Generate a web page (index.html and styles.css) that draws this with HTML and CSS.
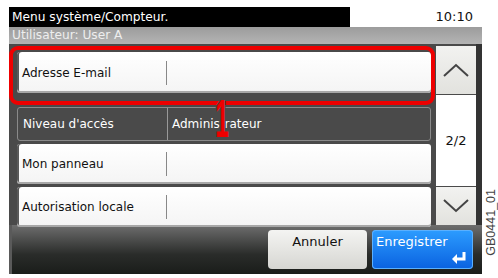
FILE: index.html
```html
<!DOCTYPE html>
<html>
<head lang="fr">
<meta charset="UTF-8">
<title>Menu système/Compteur.</title>
<link rel="stylesheet" href="styles.css">
</head>
<body>
  <div class="screen">
    <div class="titlebar">
      <div class="title">Menu système/Compteur.</div>
      <div class="clock">10:10</div>
    </div>
    <div class="userbar">Utilisateur: User A</div>

    <div class="main">
      <div class="list">
        <div class="row row-first">
          <div class="label">Adresse E-mail</div>
          <div class="sep"></div>
          <div class="value"></div>
        </div>
        <div class="row row-dark">
          <div class="label">Niveau d'accès</div>
          <div class="sep"></div>
          <div class="value">Administrateur</div>
        </div>
        <div class="row">
          <div class="label">Mon panneau</div>
          <div class="sep"></div>
          <div class="value"></div>
        </div>
        <div class="row">
          <div class="label">Autorisation locale</div>
          <div class="sep"></div>
          <div class="value"></div>
        </div>
      </div>
      <div class="scroll">
        <div class="scroll-btn scroll-up">
          <svg width="26" height="14" viewBox="0 0 26 14"><path d="M1 13 L13 2 L25 13" fill="none" stroke="#444" stroke-width="2"/></svg>
        </div>
        <div class="page">2/2</div>
        <div class="scroll-btn scroll-down">
          <svg width="26" height="14" viewBox="0 0 26 14"><path d="M1 1 L13 12 L25 1" fill="none" stroke="#444" stroke-width="2"/></svg>
        </div>
      </div>
    </div>

    <div class="footer">
      <div class="button btn-cancel">Annuler</div>
      <div class="button btn-save">
        Enregistrer
        <svg class="enter" width="16" height="14" viewBox="0 0 16 14"><path d="M13 1 V8 H5" fill="none" stroke="#fff" stroke-width="3"/><path d="M1 8 L6 3 V13 Z" fill="#fff"/></svg>
      </div>
    </div>

    <div class="callout-box"></div>
    <div class="callout-num">1</div>
  </div>
  <div class="figure-id">GB0441_01</div>
</body>
</html>
```

FILE: styles.css
```css
body {
margin: 0;
background: #fff;
font-family: "DejaVu Sans", Tahoma, sans-serif;
font-size: 12px;
}
.screen {
position: relative;
width: 473px;
margin-left: 9px;
padding-top: 7px;
}
.titlebar { display: flex; height: 20px; line-height: 20px; }
.title {
width: 338px; padding-left: 3px;
background: #000; color: #fff; font-size: 12.2px;
}
.clock {
flex: 1; text-align: right; padding-right: 9px;
color: #111; font-size: 13px;
}
.userbar {
height: 17px; line-height: 16px; padding-left: 3px;
color: #eee; font-size: 12.2px;
background: linear-gradient(#9c9c9c, #b4b4b4);
}
.main {
display: flex;
height: 181px;
background: #4a4a4a;
border-right: 6px solid #333;
}
.list {
width: 414px;
padding: 8px 0 0 8px;
}
.row {
display: flex;
align-items: center;
height: 40px;
margin-bottom: 3px;
border-radius: 3px;
background: linear-gradient(#fff, #f4f4f4);
box-shadow: inset 0 -2px 0 #a8a8a8, inset 2px 0 0 #5a5a5a;
color: #111;
}
.row-first { height: 41px; margin-bottom: 14px; }
.row-dark {
height: 32px;
background: #4a4a4a;
border: 1px solid #8a8a8a;
box-shadow: none;
color: #fff;
}
.label { width: 144px; padding-left: 5px; font-size: 12px; }
.sep { width: 1px; height: 24px; background: #888; }
.row-dark .sep { height: 32px; background: #999; }
.value { padding-left: 4px; font-size: 12px; }
.scroll {
display: flex;
flex-direction: column;
width: 40px;
margin-left: 5px;
padding-top: 2px;
}
.scroll-btn {
display: flex; align-items: center; justify-content: center;
background: linear-gradient(#f2f2f0, #e2e2de);
}
.scroll-up { height: 48px; }
.scroll-down { height: 38px; }
.page {
flex: 1;
margin: 1px 0;
background: #fff;
display: flex; align-items: center; justify-content: center;
color: #111; font-size: 13px;
}
.footer {
display: flex;
justify-content: flex-end;
gap: 5px;
height: 44px;
padding: 5px 9px 0 0;
background: linear-gradient(#6e6e6e, #2a2c2a 60%, #1a1d1a);
box-shadow: inset 3px 0 0 #5a5a5a;
}
.button {
position: relative;
height: 39px;
border-radius: 4px;
font-size: 13px;
line-height: 24px;
}
.btn-cancel {
width: 99px; text-align: center; color: #111;
background: linear-gradient(#f4f4f2, #d6d6d2);
}
.btn-save {
width: 97px; padding-left: 4px; color: #fff;
background: linear-gradient(#2c9cff, #0a62e0);
box-shadow: inset 0 0 0 1px #5ab0ff;
}
.enter { position: absolute; right: 6px; bottom: 4px; }
.callout-box {
position: absolute; left: 0; top: 46px;
width: 418px; height: 51px;
border: 4px solid #ee0000; border-radius: 9px;
}
.callout-num {
position: absolute; left: 198px; top: 91px;
color: #ee0000; font-family: "Liberation Sans", sans-serif;
font-size: 54px; font-weight: bold; line-height: 54px;
transform: scaleX(0.45);
text-shadow: 3px 0 0 #4a4a4a, -3px 0 0 #4a4a4a;
}
.figure-id {
position: absolute; left: 484px; top: 189px;
writing-mode: vertical-rl; transform: rotate(180deg);
font-family: "Liberation Sans", sans-serif;
font-size: 12.5px; line-height: 14px; color: #444;
}
```
